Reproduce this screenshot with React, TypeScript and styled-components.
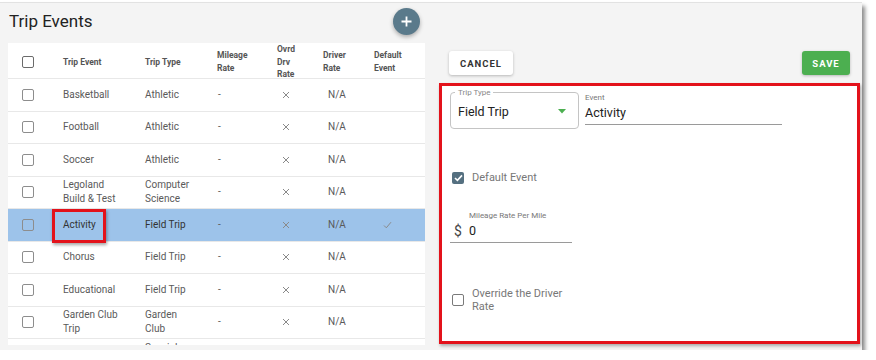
import styled, { createGlobalStyle } from "styled-components";

const GlobalStyle = createGlobalStyle`
  html, body {
    margin: 0;
    background: #fff;
  }
  body {
    font-family: Roboto, "Liberation Sans", Arial, sans-serif;
  }
  * {
    box-sizing: border-box;
  }
`;

const Screen = styled.div`
  width: 862px;
  height: 348px;
  margin-top: 2px;
  background: #f4f4f4;
  border-top: 1px solid #e2e2e2;
  display: flex;
  padding: 0 2px 0 8px;
  box-shadow: 3px 4px 4px rgba(0, 0, 0, 0.45);
`;

const LeftCol = styled.div`
  width: 417px;
  display: flex;
  flex-direction: column;
`;

const TitleBar = styled.div`
  height: 40px;
  display: flex;
  justify-content: space-between;
  align-items: flex-start;
`;

const Title = styled.h1`
  margin: 8px 0 0 1px;
  font-size: 17px;
  line-height: 20px;
  font-weight: 400;
  color: #222;
`;

const Fab = styled.button`
  width: 27px;
  height: 27px;
  margin: 4.5px 5.5px 0 0;
  border: none;
  border-radius: 50%;
  background: #5a7a8b;
  box-shadow: 0 2px 4px rgba(0, 0, 0, 0.3);
  display: flex;
  align-items: center;
  justify-content: center;
  padding: 0;
`;

const TablePanel = styled.div`
  height: 302px;
  background: #fff;
  overflow: hidden;
`;

const Row = styled.div<{ $head?: boolean; $selected?: boolean }>`
  display: grid;
  grid-template-columns: 47px 82px 72px 60px 46px 51px 1fr;
  height: ${(p) => (p.$head ? "36px" : "32.5px")};
  border-bottom: 1px solid #e8e8e8;
  background: ${(p) => (p.$selected ? "#9dc3ea" : "#fff")};
  align-items: center;
`;

const HeadCell = styled.div`
  padding: 0 6px 0 8px;
  font-size: 8.5px;
  line-height: 12.5px;
  font-weight: 700;
  color: #555;
`;

const Cell = styled.div<{ $pad?: number; $wrap?: number; $dark?: boolean }>`
  position: relative;
  height: 100%;
  display: flex;
  align-items: center;
  padding: 0 ${(p) => p.$wrap ?? 8}px 0 ${(p) => p.$pad ?? 8}px;
  font-size: 10px;
  line-height: 14px;
  color: ${(p) => (p.$dark ? "#333" : "#5a5a5a")};
`;

const BoxCell = styled.div`
  height: 100%;
  display: flex;
  align-items: center;
  padding-left: 14px;
`;

const Box = styled.span<{ $tone?: string }>`
  width: 12px;
  height: 12px;
  border: 1.5px solid ${(p) => p.$tone ?? "#8d8d8d"};
  border-radius: 2px;
  background: transparent;
  display: inline-block;
  flex-shrink: 0;
`;

const CheckedBox = styled.span`
  width: 12px;
  height: 12px;
  border-radius: 2px;
  background: #557080;
  display: inline-flex;
  align-items: center;
  justify-content: center;
  flex-shrink: 0;
`;

const Callout = styled.span`
  position: absolute;
  left: -3px;
  top: 0;
  width: 54px;
  height: 34px;
  border: 3px solid #e3121b;
  box-shadow: 1px 2px 3px rgba(0, 0, 0, 0.35);
  pointer-events: none;
`;

const RightCol = styled.div`
  flex: 1;
  margin-left: 14px;
  display: flex;
  flex-direction: column;
`;

const Toolbar = styled.div`
  margin-top: 48px;
  padding: 0 10px;
  display: flex;
  justify-content: space-between;
`;

const Button = styled.button<{ $primary?: boolean }>`
  height: 24px;
  width: ${(p) => (p.$primary ? "48px" : "64px")};
  padding: 0;
  border: none;
  border-radius: 3px;
  font-family: inherit;
  font-size: 9.5px;
  font-weight: 700;
  letter-spacing: 1px;
  color: ${(p) => (p.$primary ? "#fff" : "#333")};
  background: ${(p) => (p.$primary ? "#4caf50" : "#fff")};
  box-shadow: 0 1px 3px rgba(0, 0, 0, 0.25);
`;

const FormCard = styled.div`
  margin-top: 8px;
  height: 261px;
  border: 3px solid #e3121b;
  background: #fff;
  box-shadow: 1px 2px 3px rgba(0, 0, 0, 0.3);
  padding: 6px 8px 0;
  display: flex;
  flex-direction: column;
`;

const FieldRow = styled.div`
  display: flex;
  gap: 6px;
  align-items: flex-start;
`;

const SelectBox = styled.div`
  position: relative;
  width: 129px;
  height: 37px;
  border: 1px solid #c4c4c4;
  border-radius: 4px;
  display: flex;
  align-items: center;
  justify-content: space-between;
  padding: 1px 12px 0 7px;
  font-size: 12.5px;
  color: #222;
`;

const Notch = styled.span`
  position: absolute;
  left: 4px;
  top: -5px;
  padding: 0 3px;
  background: #fff;
  font-size: 8px;
  line-height: 9px;
  color: #888;
`;

const TextField = styled.div<{ $width: number; $top?: number }>`
  width: ${(p) => p.$width}px;
  margin-top: ${(p) => p.$top ?? 0}px;
  display: flex;
  flex-direction: column;
`;

const FieldLabel = styled.span<{ $indent?: number }>`
  margin-top: 1px;
  padding-left: ${(p) => p.$indent ?? 0}px;
  font-size: 8px;
  line-height: 10px;
  color: #777;
`;

const FieldValue = styled.div`
  margin-top: 2px;
  padding-bottom: 3px;
  border-bottom: 1px solid #9a9a9a;
  font-size: 12.5px;
  line-height: 16px;
  color: #222;
  display: flex;
  align-items: center;
  gap: 7px;
`;

const Adornment = styled.span`
  padding-left: 4px;
  font-size: 14px;
  color: #444;
`;

const CheckRow = styled.div<{ $top: number }>`
  margin-top: ${(p) => p.$top}px;
  padding-left: 2px;
  display: flex;
  align-items: center;
  gap: 8px;
`;

const CheckLabel = styled.span`
  max-width: 100px;
  font-size: 11px;
  line-height: 13px;
  color: #777;
`;

const Cross = () => (
  <svg width="8" height="8" viewBox="0 0 8 8">
    <path d="M1 1 L7 7 M7 1 L1 7" stroke="#8a8a8a" strokeWidth="1" />
  </svg>
);

const Tick = () => (
  <svg width="9" height="8" viewBox="0 0 9 8">
    <path d="M1 4.5 L3.3 6.8 L8 1.2" fill="none" stroke="#8a8a8a" strokeWidth="1" />
  </svg>
);

const events = [
  { name: "Basketball", type: "Athletic" },
  { name: "Football", type: "Athletic" },
  { name: "Soccer", type: "Athletic" },
  { name: "Legoland Build & Test", type: "Computer Science" },
  { name: "Activity", type: "Field Trip", selected: true },
  { name: "Chorus", type: "Field Trip" },
  { name: "Educational", type: "Field Trip" },
  { name: "Garden Club Trip", type: "Garden Club" },
  { name: "Spanish", type: "Special Events" },
];

export default function App() {
  return (
    <>
      <GlobalStyle />
      <Screen>
        <LeftCol>
          <TitleBar>
            <Title>Trip Events</Title>
            <Fab aria-label="Add">
              <svg width="11" height="11" viewBox="0 0 11 11">
                <path d="M5.5 0.5 V10.5 M0.5 5.5 H10.5" stroke="#fff" strokeWidth="1.8" />
              </svg>
            </Fab>
          </TitleBar>
          <TablePanel>
            <Row $head>
              <BoxCell>
                <Box $tone="#6b6b6b" />
              </BoxCell>
              <HeadCell>Trip Event</HeadCell>
              <HeadCell>Trip Type</HeadCell>
              <HeadCell>Mileage Rate</HeadCell>
              <HeadCell>
                Ovrd
                <br />
                Drv
                <br />
                Rate
              </HeadCell>
              <HeadCell>Driver Rate</HeadCell>
              <HeadCell>Default Event</HeadCell>
            </Row>
            {events.map((ev) => (
              <Row key={ev.name} $selected={ev.selected}>
                <BoxCell>
                  <Box />
                </BoxCell>
                <Cell $wrap={16} $dark={ev.selected}>
                  {ev.name}
                  {ev.selected && <Callout />}
                </Cell>
                <Cell $wrap={18} $dark={ev.selected}>
                  {ev.type}
                </Cell>
                <Cell $pad={9}>-</Cell>
                <Cell $pad={13}>
                  <Cross />
                </Cell>
                <Cell $pad={13}>N/A</Cell>
                <Cell $pad={17}>{ev.selected && <Tick />}</Cell>
              </Row>
            ))}
          </TablePanel>
        </LeftCol>

        <RightCol>
          <Toolbar>
            <Button>CANCEL</Button>
            <Button $primary>SAVE</Button>
          </Toolbar>
          <FormCard>
            <FieldRow>
              <SelectBox>
                <Notch>Trip Type</Notch>
                Field Trip
                <svg width="8" height="5" viewBox="0 0 8 5">
                  <path d="M0 0 H8 L4 4.5 Z" fill="#4caf50" />
                </svg>
              </SelectBox>
              <TextField $width={197}>
                <FieldLabel>Event</FieldLabel>
                <FieldValue>Activity</FieldValue>
              </TextField>
            </FieldRow>

            <CheckRow $top={42}>
              <CheckedBox>
                <svg width="9" height="8" viewBox="0 0 9 8">
                  <path d="M1 4 L3.4 6.4 L8 1.4" fill="none" stroke="#fff" strokeWidth="1.6" />
                </svg>
              </CheckedBox>
              <CheckLabel>Default Event</CheckLabel>
            </CheckRow>

            <TextField $width={122} $top={26}>
              <FieldLabel $indent={19}>Mileage Rate Per Mile</FieldLabel>
              <FieldValue>
                <Adornment>$</Adornment>0
              </FieldValue>
            </TextField>

            <CheckRow $top={44}>
              <Box $tone="#7a7a7a" />
              <CheckLabel>Override the Driver Rate</CheckLabel>
            </CheckRow>
          </FormCard>
        </RightCol>
      </Screen>
    </>
  );
}
